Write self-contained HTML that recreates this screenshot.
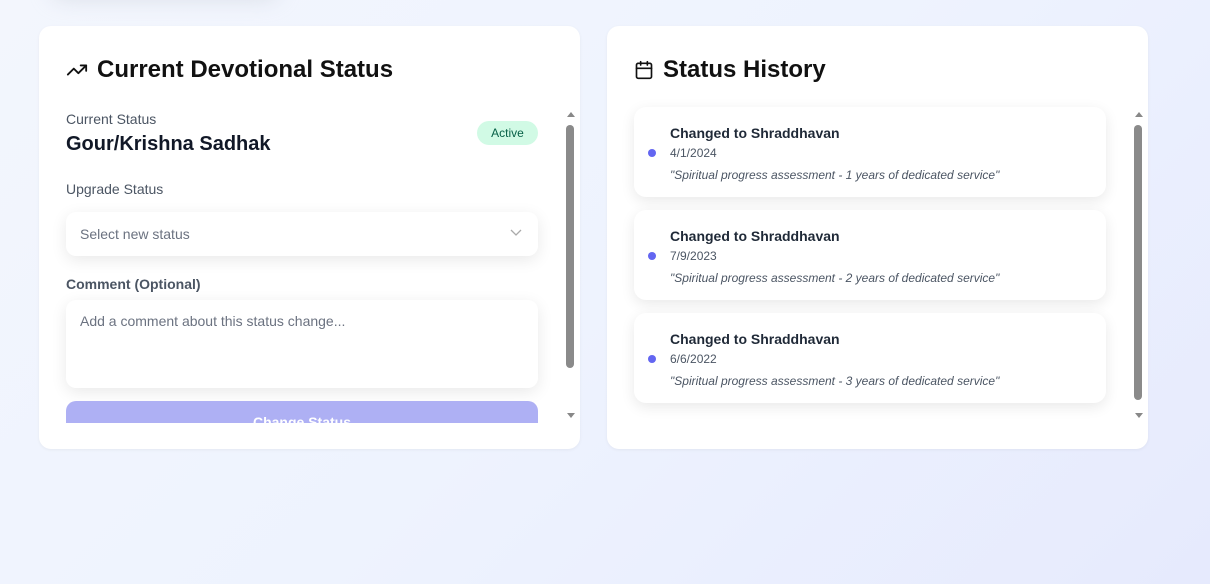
<!DOCTYPE html>
<html><head><style>
*{box-sizing:border-box;margin:0;padding:0}
body{width:1210px;height:584px;overflow:hidden;background:linear-gradient(135deg,#f3f6fd 0%,#eef3fe 50%,#e6eafd 100%);font-family:"Liberation Sans",sans-serif;position:relative}
.blob{position:absolute;left:50px;top:-30px;width:230px;height:30px;border-radius:20px;background:rgba(200,205,215,.5);filter:blur(10px)}
.card{position:absolute;top:26px;width:541px;height:423px;background:#fff;border-radius:12px;box-shadow:0 1px 3px rgba(0,0,0,.05)}
.title{position:absolute;left:27px;top:30px;font-size:24px;font-weight:600;color:#111;display:flex;align-items:center;gap:9px}
.sb{position:absolute;width:12px;top:81px;height:316px}
.sb .up,.sb .dn{position:absolute;left:2px;width:0;height:0;border-left:4px solid transparent;border-right:4px solid transparent}
.sb .up{top:5px;border-bottom:5px solid #888}
.sb .dn{bottom:5px;border-top:5px solid #888}
.sb .th{position:absolute;left:1px;width:8px;top:18px;height:243px;background:#8a8a8a;border-radius:4px}
.lbl{position:absolute;left:27px;font-size:14px;color:#4b5563}
.field{position:absolute;left:27px;width:472px;background:#fff;border-radius:10px;box-shadow:0 4px 16px rgba(0,0,0,.09);font-size:14px;color:#6b7280;padding-left:14px}
.item{position:absolute;left:27px;width:472px;height:90px;background:#fff;border-radius:12px;box-shadow:0 4px 14px rgba(0,0,0,.09)}
.item .dot{position:absolute;left:14px;top:42px;width:8px;height:8px;border-radius:50%;background:#6366f1}
.item .h{position:absolute;left:36px;top:18px;font-size:14px;font-weight:600;color:#1f2937}
.item .d{position:absolute;left:36px;top:39px;font-size:12px;color:#4b5563}
.item .c{position:absolute;left:36px;top:61px;font-size:12px;font-style:italic;color:#4b5563}
</style></head><body>
<div class="blob"></div>
<div class="card" style="left:39px">
 <div class="title"><svg width="22" height="22" viewBox="0 0 24 24" fill="none" stroke="#111" stroke-width="2" stroke-linecap="round" stroke-linejoin="round"><polyline points="22 7 13.5 15.5 8.5 10.5 2 17"/><polyline points="16 7 22 7 22 13"/></svg>Current Devotional Status</div>
 <div class="lbl" style="top:85px">Current Status</div>
 <div style="position:absolute;left:27px;top:107px;font-size:20px;font-weight:600;color:#111827">Gour/Krishna Sadhak</div>
 <div style="position:absolute;left:438px;top:95px;width:61px;height:24px;border-radius:12px;background:#d1fae5;color:#065f46;font-size:12px;line-height:24px;text-align:center">Active</div>
 <div class="lbl" style="top:155px">Upgrade Status</div>
 <div class="field" style="top:186px;height:44px;line-height:44px">Select new status<svg style="position:absolute;right:16px;top:17px" width="12" height="8" viewBox="0 0 12 8" fill="none" stroke="#aaa" stroke-width="1.3"><polyline points="1 1 6 6 11 1"/></svg></div>
 <div class="lbl" style="top:250px;font-weight:600">Comment (Optional)</div>
 <div class="field" style="top:274px;height:88px;padding-top:13px">Add a comment about this status change...</div>
 <div style="position:absolute;left:27px;top:375px;width:472px;height:22px;background:#aeb0f4;border-radius:10px 10px 0 0;overflow:hidden;color:#fff;font-size:14px;font-weight:600;text-align:center;padding-top:13px">Change Status</div>
 <div class="sb" style="left:526px"><div class="up"></div><div class="th"></div><div class="dn"></div></div>
</div>
<div class="card" style="left:607px">
 <div class="title"><svg width="20" height="22" viewBox="0 0 24 24" fill="none" stroke="#111" stroke-width="2" stroke-linecap="round" stroke-linejoin="round"><rect x="3" y="4" width="18" height="18" rx="2"/><line x1="16" y1="2" x2="16" y2="6"/><line x1="8" y1="2" x2="8" y2="6"/><line x1="3" y1="10" x2="21" y2="10"/></svg>Status History</div>
 <div class="item" style="top:81px"><div class="dot"></div><div class="h">Changed to Shraddhavan</div><div class="d">4/1/2024</div><div class="c">"Spiritual progress assessment - 1 years of dedicated service"</div></div>
 <div class="item" style="top:184px"><div class="dot"></div><div class="h">Changed to Shraddhavan</div><div class="d">7/9/2023</div><div class="c">"Spiritual progress assessment - 2 years of dedicated service"</div></div>
 <div class="item" style="top:287px"><div class="dot"></div><div class="h">Changed to Shraddhavan</div><div class="d">6/6/2022</div><div class="c">"Spiritual progress assessment - 3 years of dedicated service"</div></div>
 <div class="sb" style="left:526px"><div class="up"></div><div class="th" style="height:275px"></div><div class="dn"></div></div>
</div>
</body></html>
